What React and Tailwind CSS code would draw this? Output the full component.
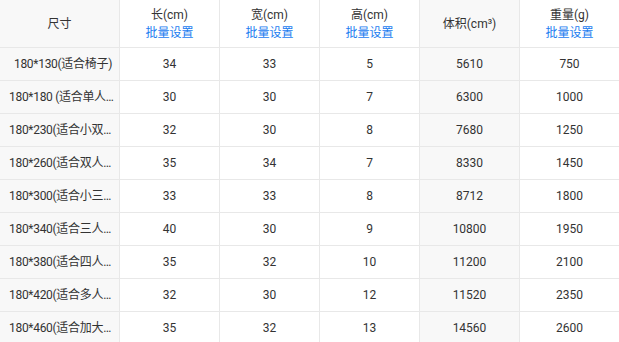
const rows = [
  { size: "180*130(适合椅子)", l: 34, w: 33, h: 5, v: 5610, g: 750 },
  { size: "180*180 (适合单人床)", l: 30, w: 30, h: 7, v: 6300, g: 1000 },
  { size: "180*230(适合小双人床)", l: 32, w: 30, h: 8, v: 7680, g: 1250 },
  { size: "180*260(适合双人床)", l: 35, w: 34, h: 7, v: 8330, g: 1450 },
  { size: "180*300(适合小三人床)", l: 33, w: 33, h: 8, v: 8712, g: 1800 },
  { size: "180*340(适合三人床)", l: 40, w: 30, h: 9, v: 10800, g: 1950 },
  { size: "180*380(适合四人床)", l: 35, w: 32, h: 10, v: 11200, g: 2100 },
  { size: "180*420(适合多人床)", l: 32, w: 30, h: 12, v: 11520, g: 2350 },
  { size: "180*460(适合加大床)", l: 35, w: 32, h: 13, v: 14560, g: 2600 },
];

const HeadCell = ({ title, batch, gray }) => (
  <div
    className={
      "w-[100px] shrink-0 border-r border-[#e8e8e8] flex flex-col items-center justify-center leading-[18px] " +
      (gray ? "bg-[#f8f8f8]" : "bg-white")
    }
  >
    <span>{title}</span>
    {batch && <span className="text-[#1a7cf0] cursor-pointer">批量设置</span>}
  </div>
);

const Cell = ({ children, gray }) => (
  <div
    className={
      "w-[100px] shrink-0 border-r border-[#e8e8e8] flex items-center justify-center " +
      (gray ? "bg-[#f8f8f8]" : "bg-white")
    }
  >
    {children}
  </div>
);

export default function App() {
  return (
    <div
      className="w-[619px] h-[342px] overflow-hidden bg-white text-[12px] text-[#333]"
      style={{ fontFamily: 'Roboto, "Noto Sans CJK SC", sans-serif' }}
    >
      <div className="w-[620px]">
        {/* header */}
        <div className="flex h-[48px] border-b border-[#e8e8e8]">
          <div className="w-[120px] shrink-0 border-r border-[#e8e8e8] bg-[#f8f8f8] flex items-center justify-center">
            尺寸
          </div>
          <HeadCell title="长(cm)" batch />
          <HeadCell title="宽(cm)" batch />
          <HeadCell title="高(cm)" batch />
          <HeadCell title="体积(cm³)" gray />
          <HeadCell title="重量(g)" batch />
        </div>

        {rows.map((r) => (
          <div key={r.size} className="flex h-[33px] border-b border-[#e8e8e8]">
            <div className="w-[120px] shrink-0 border-r border-[#e8e8e8] bg-[#f8f8f8] flex items-center pl-[9px] pr-[2px]">
              <span className="block w-full truncate text-center tracking-[-0.3px]">{r.size}</span>
            </div>
            <Cell>{r.l}</Cell>
            <Cell>{r.w}</Cell>
            <Cell>{r.h}</Cell>
            <Cell gray>{r.v}</Cell>
            <Cell>{r.g}</Cell>
          </div>
        ))}
      </div>
    </div>
  );
}
